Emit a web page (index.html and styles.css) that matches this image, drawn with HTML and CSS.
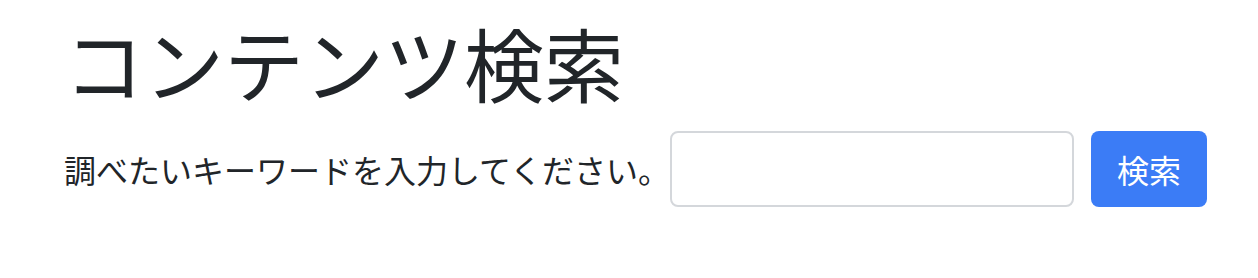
FILE: index.html
```html
<!DOCTYPE html>
<html lang="ja">
<head>
<meta charset="utf-8">
<title>コンテンツ検索</title>
<link rel="stylesheet" href="styles.css">
</head>
<body>
<main class="page">
  <h1 class="title">コンテンツ検索</h1>
  <form class="search">
    <label class="label" for="q">調べたいキーワードを入力してください。</label>
    <input class="input" id="q" type="text">
    <button class="button" type="button">検索</button>
  </form>
</main>
</body>
</html>
```
FILE: styles.css
```css
html, body {
  margin: 0;
  padding: 0;
  background: #ffffff;
}
body {
  font-family: "Noto Sans CJK JP", "Noto Sans", sans-serif;
  color: #212529;
}
.page {
  padding: 13px 64px 0 64px;
}
.title {
  margin: 0 0 22px 0;
  font-size: 80px;
  font-weight: 400;
  line-height: 96px;
  white-space: nowrap;
}
.search {
  display: flex;
  align-items: center;
}
.label {
  flex: none;
  white-space: nowrap;
  font-size: 32px;
  line-height: 48px;
  margin-right: 0;
}
.input {
  flex: none;
  box-sizing: border-box;
  width: 404px;
  height: 76px;
  border: 2px solid #d4d7db;
  border-radius: 8px;
  margin: 0 17px 0 0;
  padding: 0 24px;
  font-size: 32px;
  font-family: inherit;
  background: #fff;
}
.button {
  flex: none;
  white-space: nowrap;
  box-sizing: border-box;
  height: 76px;
  width: 116px;
  padding: 0;
  border: none;
  border-radius: 8px;
  background: #3b7cf6;
  color: #ffffff;
  font-family: inherit;
  font-size: 32px;
  line-height: 48px;
}
```
